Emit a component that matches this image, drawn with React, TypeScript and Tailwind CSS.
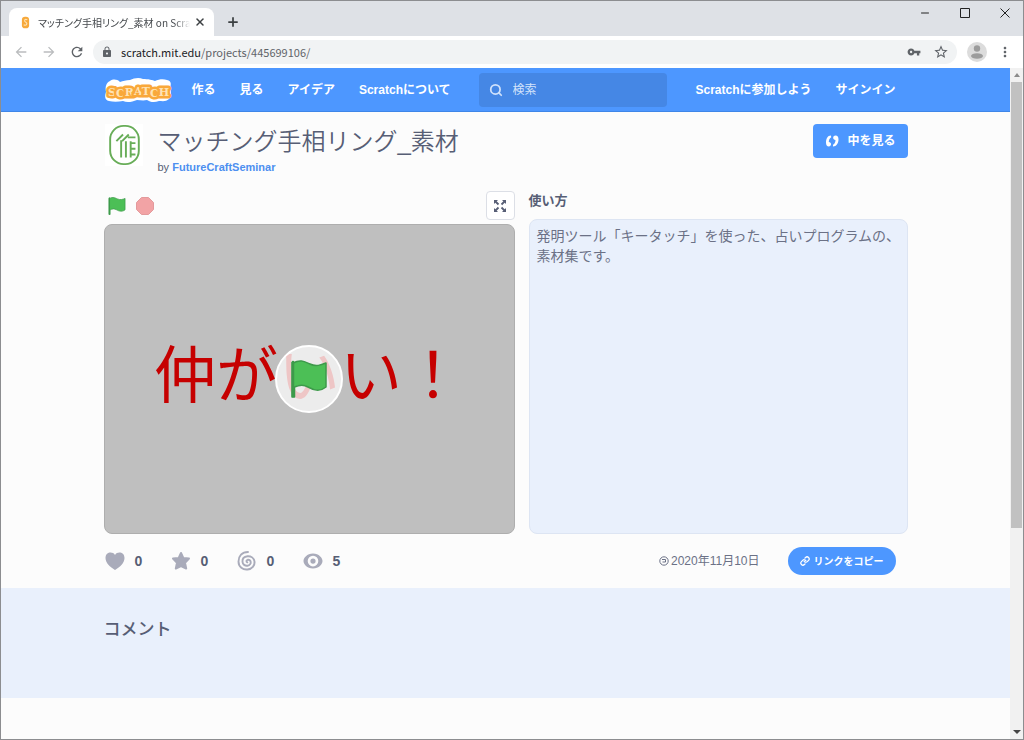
import type { ReactNode } from "react";
import { MdArrowBack, MdArrowForward, MdLock, MdMoreVert, MdRefresh, MdStarBorder, MdVpnKey } from "react-icons/md";
import { Link, Minus, Plus, Search, X } from "lucide-react";

const JP = "font-['Liberation_Sans','Noto_Sans_CJK_JP',sans-serif]";
const UI = "font-['Noto_Sans_CJK_JP',sans-serif]";

function Flag({ className }: { className: string }) {
  return (
    <svg viewBox="0 0 36 38" className={className} aria-hidden="true">
      <path
        d="M2 3 C10 -1 14 2 19 4 C25 7 30 5 35 3 V27 C29 32 22 30 17 27 C12 24 8 25 3.500 27 V37 H1 V2.500 Z"
        fill="#4cbf56"
        stroke="#3d9a4a"
        strokeWidth="1.500"
        strokeLinejoin="round"
      />
      <path d="M2 2 V36" stroke="#3d9a4a" strokeWidth="2.500" strokeLinecap="round" />
    </svg>
  );
}

function ScratchLogo() {
  return (
    <svg viewBox="0 0 68 28" className="h-7 w-[68px]" role="img" aria-label="Scratch">
      <path
        d="M6 5 C9 3 13 3 16 6 C19 5 22 4 26 4 C30 2 35 1 39 3 C44 3 49 4 51 5 C55 3 60 3 63 4 C68 5 67 9 66 12 C67 15 68 20 65 23 C62 26 58 25 55 25 C50 27 46 26 43 24 C39 25 36 24 33 24 C28 26 23 27 19 25 C14 26 9 26 5 25 C0 24 1 19 2 16 C1 11 2 7 6 5 Z"
        fill="#fff"
      />
      <text
        x="4"
        y="20"
        dy="0 1 -1 -1 0 2 -1"
        fontFamily="DejaVu Serif, serif"
        fontWeight="700"
        fontSize="11"
        fill="#ffe3b4"
        stroke="#f9a83a"
        strokeWidth="5"
        strokeLinejoin="round"
        className="[paint-order:stroke]"
      >
        SCRATCH
      </text>
    </svg>
  );
}

function BrowserTabs() {
  return (
    <div className={`flex h-[35px] items-end bg-[#dee1e6] pl-2 ${UI}`}>
      <div className="flex h-7 w-[205px] items-center rounded-t-lg bg-white pr-2 pl-3">
        <svg viewBox="0 0 10 14" className="h-[13px] w-[9px] shrink-0" aria-hidden="true">
          <rect x="1" y="0.500" width="8" height="13" rx="3.500" fill="#f7a93b" />
          <path d="M7 4 C4 2.500 3 5 5 6.500 C8 8 6 11 3 9.500" fill="none" stroke="#fde3b5" strokeWidth="1.200" />
        </svg>
        <span className="ml-2 flex-1 overflow-hidden text-[10px] whitespace-nowrap text-[#45494d] [font-feature-settings:'palt'] [mask-image:linear-gradient(to_right,black_90%,transparent)]">
          マッチング手相リング_素材 on Scratch
        </span>
        <button aria-label="Close tab" className="ml-1 text-[#3c4043]">
          <X className="size-3" strokeWidth={3} />
        </button>
      </div>
      <button aria-label="New tab" className="mb-[7px] ml-3 text-[#3c4043]">
        <Plus className="size-3.5" strokeWidth={3} />
      </button>
      <div className="ml-auto flex items-center gap-7 self-start pt-1.5 pr-3 text-[#222]">
        <button aria-label="Minimize"><Minus className="size-3" strokeWidth={2} /></button>
        <button aria-label="Maximize">
          <svg viewBox="0 0 12 12" className="size-3"><path d="M1.500 1.500 H10.500 V10.500 H1.500 Z" fill="none" stroke="currentColor" /></svg>
        </button>
        <button aria-label="Close">
          <svg viewBox="0 0 12 12" className="size-3"><path d="M1.500 1.500 L10.500 10.500 M10.500 1.500 L1.500 10.500" stroke="currentColor" /></svg>
        </button>
      </div>
    </div>
  );
}

function AddressBar() {
  return (
    <div className={`flex h-8 items-center bg-white pr-2.5 pl-3 ${UI}`}>
      <div className="flex gap-3 text-[#5f6368]">
        <button aria-label="Back" className="text-[#babcbe]"><MdArrowBack className="size-4" /></button>
        <button aria-label="Forward" className="text-[#babcbe]"><MdArrowForward className="size-4" /></button>
        <button aria-label="Reload"><MdRefresh className="size-4" /></button>
      </div>
      <div className="ml-2 flex h-6 flex-1 items-center rounded-full bg-[#f1f3f4] px-2 text-[#5f6368]">
        <MdLock className="size-3" />
        <span className="ml-2 flex-1 text-[11px]">
          <span className="text-[#202124]">scratch.mit.edu</span>/projects/445699106/
        </span>
        <button aria-label="Passwords"><MdVpnKey className="size-3.5" /></button>
        <button aria-label="Bookmark" className="ml-3"><MdStarBorder className="size-4" /></button>
      </div>
      <button aria-label="Profile" className="ml-2.5">
        <svg viewBox="0 0 20 20" className="size-5">
          <circle cx="10" cy="10" r="10" fill="#dcdcdc" />
          <circle cx="10" cy="6.500" r="3.200" fill="#9c9c9c" />
          <ellipse cx="10" cy="14" rx="6" ry="2.800" fill="#9c9c9c" />
        </svg>
      </button>
      <button aria-label="Menu" className="ml-2.5 text-[#5f6368]"><MdMoreVert className="size-4" /></button>
    </div>
  );
}

function SiteNav() {
  return (
    <header className="h-11 border-b border-[#3f86e8] bg-[#4d97ff]">
      <nav className="mx-auto flex h-full max-w-[804px] items-center text-xs font-bold text-white">
        <a href="#home"><ScratchLogo /></a>
        <a href="#create" className="ml-5">作る</a>
        <a href="#explore" className="ml-6">見る</a>
        <a href="#ideas" className="ml-6">アイデア</a>
        <a href="#about" className="ml-6">Scratchについて</a>
        <label className="ml-7 flex h-[34px] flex-1 items-center rounded bg-[#4587e5] px-2.5">
          <Search className="size-3.5 shrink-0 text-[#cfe1fb]" strokeWidth={3} />
          <input
            type="search"
            aria-label="検索"
            placeholder="検索"
            className="ml-2.5 w-full min-w-0 bg-transparent font-normal outline-none placeholder:text-[#d3e3fb]"
          />
        </label>
        <a href="#join" className="ml-7">Scratchに参加しよう</a>
        <a href="#signin" className="mr-3 ml-6">サインイン</a>
      </nav>
    </header>
  );
}

function ProjectHeader() {
  return (
    <div className="flex items-start pt-3">
      <svg viewBox="0 0 40 44" className="h-[42px] w-10 shrink-0" role="img" aria-label="FutureCraftSeminar">
        <rect width="40" height="44" fill="#fff" />
        <rect x="5.500" y="2" width="30" height="40" rx="14" fill="none" stroke="#68ad58" strokeWidth="2" />
        <path
          d="M12 18 L19 11 M18 18 L25 11 M24 14 H32 M17 17 V35 M22 18 V35 M27 18 V35 M27 20 H32 M27 26 H32 M27 32 H32"
          fill="none"
          stroke="#68ad58"
          strokeWidth="2"
        />
      </svg>
      <div className="ml-3.5 flex-1">
        <h1 className="text-2xl leading-9 font-[350] text-[#575e75]">マッチング手相リング_素材</h1>
        <p className="text-[11px] leading-[14px] text-[#575e75]">
          by <a href="#user" className="font-bold text-[#4d8ff0]">FutureCraftSeminar</a>
        </p>
      </div>
      <button className="flex h-[34px] items-center gap-2 rounded bg-[#4d97ff] px-3 text-xs font-bold text-white">
        <svg viewBox="0 0 14 14" className="size-3.5" fill="#fff" aria-hidden="true">
          <path d="M6 1.500 C2.500 1.500 1 5 1 8.500 C1 11 2 12.500 3.800 12.500 C5.200 12.500 6 11.500 6 10.300 C6 9 5.200 8.200 3.800 8.100 C3.800 6 4.500 4.200 6.200 3.200 Z" />
          <path d="M8 12.500 C11.500 12.500 13.500 9 13.500 5.500 C13.500 3 12.500 1.500 10.500 1.500 C9 1.500 8.200 2.500 8.200 3.700 C8.200 5 9 5.800 10.500 5.900 C10.500 8 9.700 9.800 8 10.800 Z" />
        </svg>
        中を見る
      </button>
    </div>
  );
}

function Player() {
  return (
    <div className="flex flex-1 flex-col">
      <div className="flex h-[33px] items-start pl-1">
        <button aria-label="Start" className="mt-1.5"><Flag className="size-[18px]" /></button>
        <button aria-label="Stop" className="mt-1.5 ml-2.5">
          <svg viewBox="0 0 18 18" className="size-[18px]">
            <path d="M5.500 0.500 H12.500 L17.500 5.500 V12.500 L12.500 17.500 H5.500 L0.500 12.500 V5.500 Z" fill="#f2a3a5" stroke="#e39a9c" />
          </svg>
        </button>
        <button
          aria-label="Full screen"
          className="ml-auto flex size-[29px] items-center justify-center rounded border border-[#dcdfe6] bg-white"
        >
          <svg viewBox="0 0 14 14" className="size-3.5" fill="#575e75" stroke="#575e75" aria-hidden="true">
            <path
              d="M1 1 H5 L1 5 Z M13 1 V5 L9 1 Z M1 13 V9 L5 13 Z M13 13 H9 L13 9 Z"
              stroke="none"
            />
            <path d="M2 2 L5.500 5.500 M12 2 L8.500 5.500 M2 12 L5.500 8.500 M12 12 L8.500 8.500" strokeWidth="1.800" />
          </svg>
        </button>
      </div>
      <div className="relative flex h-[310px] items-center justify-center rounded-lg border border-[#aeaeae] bg-[#bfbfbf] pb-4">
        <span className={`text-[62px] leading-none text-[#c60000] ${UI}`}>仲がいい！</span>
        <button
          aria-label="Start project"
          className="absolute inset-0 m-auto flex size-[68px] items-center justify-center rounded-full border-2 border-white bg-[#f8f8f8]/80"
        >
          <Flag className="h-[38px] w-9" />
        </button>
      </div>
    </div>
  );
}

function Stat({ icon, value }: { icon: ReactNode; value: number }) {
  return (
    <span className="flex w-[66px] items-center gap-2.5 text-sm font-bold text-[#575e75]">
      <svg viewBox="0 0 20 20" className="size-5 text-[#a9abba]" fill="currentColor" aria-hidden="true">
        {icon}
      </svg>
      {value}
    </span>
  );
}

const STATS = [
  {
    name: "loves",
    value: 0,
    icon: <path d="M10 19 C5 16 0.500 12 0.500 7 C0.500 1 7.500 0 10 4 C12.500 0 19.500 1 19.500 7 C19.500 12 15 16 10 19 Z" />,
  },
  {
    name: "favorites",
    value: 0,
    icon: (
      <path
        d="M10 2 L12.300 7 L18 7.500 L14 11.700 L15.200 17.500 L10 15 L4.800 17.500 L6 11.700 L2 7.500 L7.700 7 Z"
        stroke="currentColor"
        strokeWidth="2"
        strokeLinejoin="round"
      />
    ),
  },
  {
    name: "remixes",
    value: 0,
    icon: (
      <path
        d="M11 1 C5 1 1.500 5 1.500 10.500 C1.500 16 6 19 10.500 18.500 C15 18 18 14.500 17.500 10.500 C17 7 14 5 10.500 5.200 C7.500 5.500 5.200 7.500 5.500 10.800 C5.800 13.500 8 15 10.500 14.700 C12.800 14.400 14 12.500 13.700 10.800 C13.400 9.200 12 8.500 10.700 8.800 C9.200 9.200 9 10.800 10.300 11.300"
        fill="none"
        stroke="currentColor"
        strokeWidth="1.900"
        strokeLinecap="round"
      />
    ),
  },
  {
    name: "views",
    value: 5,
    icon: (
      <path
        fillRule="evenodd"
        d="M10 2.500 C4 2.500 0.500 7 0.500 10 C0.500 13 4 17.500 10 17.500 C16 17.500 19.500 13 19.500 10 C19.500 7 16 2.500 10 2.500 Z M10 4.800 A5.300 5.300 0 0 1 10 15.400 A5.300 5.300 0 0 1 10 4.800 Z M10 7.500 A2.600 2.600 0 0 0 10 12.700 A2.600 2.600 0 0 0 10 7.500 Z"
      />
    ),
  },
];

function ProjectFooter() {
  return (
    <div className="flex h-[54px] items-center pr-3 pl-px">
      {STATS.map((s) => (
        <Stat key={s.name} icon={s.icon} value={s.value} />
      ))}
      <span className="ml-auto flex items-center gap-0.5 text-xs text-[#6b7186]">
        <svg viewBox="0 0 10 10" className="size-2.5" fill="none" stroke="#6b7186" aria-hidden="true">
          <circle cx="5" cy="5" r="4.200" />
          <path d="M3 3.500 H6.500 V6 H3.500" />
        </svg>
        2020年11月10日
      </span>
      <button className="ml-7 flex h-7 items-center gap-1 rounded-full bg-[#4d97ff] px-3 text-[10px] font-bold text-white">
        <Link className="size-2.5" strokeWidth={3} />
        リンクをコピー
      </button>
    </div>
  );
}

function Scrollbar() {
  return (
    <div className="flex w-[13px] flex-col items-center justify-between bg-[#f1f1f1] py-1" aria-hidden="true">
      <svg viewBox="0 0 8 6" className="h-1.5 w-2"><path d="M1 5 L4 1 L7 5 Z" fill="#8a8a8a" /></svg>
      <div className="mt-1 w-[11px] basis-[446px] bg-[#c1c1c1]" />
      <div className="flex-1" />
      <svg viewBox="0 0 8 6" className="h-1.5 w-2"><path d="M0 1 L4 5 L8 1 Z" fill="#444" /></svg>
    </div>
  );
}

export default function App() {
  return (
    <div className={`flex min-h-screen flex-col border border-[#8c8d90] bg-[#fcfcfc] ${JP}`}>
      <BrowserTabs />
      <AddressBar />
      <div className="flex flex-1">
        <div className="flex-1">
          <SiteNav />
          <main>
            <div className="mx-auto max-w-[804px]">
              <ProjectHeader />
              <div className="flex gap-3.5 pt-[17px]">
                <Player />
                <section className="flex w-[379px] flex-col">
                  <h2 className="h-7 text-[13px] leading-5 font-bold text-[#575e75]">使い方</h2>
                  <p className="flex-1 rounded-lg border border-[#dde5f3] bg-[#e9f0fc] py-1.5 pr-1 pl-[7px] text-sm leading-5 text-[#6b7186]">
                    発明ツール「キータッチ」を使った、占いプログラムの、素材集です。
                  </p>
                </section>
              </div>
              <ProjectFooter />
            </div>
            <section className="h-[110px] bg-[#e9f0fc]">
              <h2 className="mx-auto max-w-[804px] pt-7 text-[17px] leading-7 font-medium text-[#575e75]">コメント</h2>
            </section>
          </main>
        </div>
        <Scrollbar />
      </div>
    </div>
  );
}
